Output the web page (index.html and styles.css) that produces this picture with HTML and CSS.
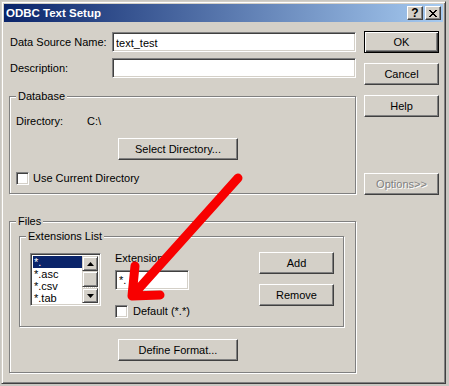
FILE: index.html
```html
<!DOCTYPE html>
<html>
<head>
<meta charset="utf-8">
<link rel="stylesheet" href="styles.css">
</head>
<body>

<div class="dialog">
  <div class="titlebar">
    <span class="title">ODBC Text Setup</span>
    <div class="capbtns">
      <span class="capbtn help">?</span>
      <span class="capbtn">
        <svg width="8" height="7" viewBox="0 0 8 7"><path d="M0 0L7 7M1 0L8 7M7 0L0 7M8 0L1 7" stroke="#000" stroke-width="1"/></svg>
      </span>
    </div>
  </div>

  <div class="content">
    <div class="main">
      <div class="field">
        <label>Data Source Name:</label>
        <input class="edit" type="text" value="text_test">
      </div>
      <div class="field">
        <label>Description:</label>
        <input class="edit" type="text" value="">
      </div>

      <fieldset class="group db">
        <legend>Database</legend>
        <div class="dirline"><span class="dirlabel">Directory:</span><span>C:\</span></div>
        <button class="btn wide">Select Directory...</button>
        <div class="check"><span class="box"></span>Use Current Directory</div>
      </fieldset>

      <fieldset class="group files">
        <legend>Files</legend>
        <fieldset class="group exts">
          <legend>Extensions List</legend>
          <div class="extrow">
            <div class="listbox">
              <div class="items">
                <div class="item sel">*.</div>
                <div class="item">*.asc</div>
                <div class="item">*.csv</div>
                <div class="item">*.tab</div>
              </div>
              <div class="scroll">
                <span class="sbtn"><svg width="7" height="4" viewBox="0 0 7 4"><path d="M3.5 0L7 4H0z" fill="#000"/></svg></span>
                <span class="thumb"></span>
                <span class="track"></span>
                <span class="sbtn"><svg width="7" height="4" viewBox="0 0 7 4"><path d="M0 0H7L3.5 4z" fill="#000"/></svg></span>
              </div>
            </div>
            <div class="extcol">
              <div>Extension:</div>
              <input class="edit ext" type="text" value="*.">
              <div class="check"><span class="box"></span>Default (*.*)</div>
            </div>
            <div class="addcol">
              <button class="btn">Add</button>
              <button class="btn">Remove</button>
            </div>
          </div>
        </fieldset>
        <button class="btn wide">Define Format...</button>
      </fieldset>
    </div>

    <div class="side">
      <button class="btn default">OK</button>
      <button class="btn">Cancel</button>
      <button class="btn">Help</button>
      <button class="btn disabled">Options&gt;&gt;</button>
    </div>
  </div>
</div>

<svg class="arrow" width="449" height="386" viewBox="0 0 449 386">
  <path d="M238 178L133 295M135 266L132 296L160 295" fill="none" stroke="#f80000" stroke-width="9" stroke-linecap="round" stroke-linejoin="round"/>
</svg>

</body>
</html>
```

FILE: styles.css
```css
* { box-sizing: border-box; }

html, body { margin: 0; }

body {
  position: relative;
  width: 449px;
  height: 386px;
  overflow: hidden;
  background: #c9c7c2;
  font-family: "Liberation Sans", Arial, sans-serif;
  font-size: 11px;
  line-height: 13px;
  color: #000;
}

/* window frame */
.dialog {
  margin: 1px 0 0 1px;
  width: 445px;
  height: 383px;
  padding: 2px;
  background: #d4d0c8;
  border: 1px solid;
  border-color: #d4d0c8 #404040 #404040 #d4d0c8;
  box-shadow: inset 1px 1px #fff, inset -1px -1px #808080;
}

.titlebar {
  display: flex;
  align-items: center;
  height: 18px;
  padding: 0 2px;
  background: linear-gradient(to right, #0a246a, #a6caf0);
}

.title {
  color: #fff;
  font-weight: bold;
  font-size: 11.5px;
}

.capbtns {
  display: flex;
  gap: 2px;
  margin-left: auto;
}

.capbtn {
  display: flex;
  align-items: center;
  justify-content: center;
  width: 16px;
  height: 14px;
  background: #d4d0c8;
  border: 1px solid;
  border-color: #fff #404040 #404040 #fff;
  box-shadow: inset -1px -1px #808080;
  font-weight: bold;
  font-size: 12px;
}

/* body */
.content {
  display: flex;
  gap: 8px;
  padding: 9px 0 0 5px;
}

.main {
  width: 347px;
  padding-top: 1px;
}

.side {
  display: flex;
  flex-direction: column;
  width: 75px;
}

.side .btn + .btn { margin-top: 10px; }
.side .btn.disabled { margin-top: 56px; }

.field {
  display: flex;
  align-items: center;
  height: 20px;
}

.field + .field { margin-top: 6px; }

.field label {
  width: 103px;
  padding-left: 1px;
}

.edit {
  width: 244px;
  height: 20px;
  margin: 0;
  padding: 1px 3px 0;
  font: inherit;
  background: #fff;
  border: 1px solid;
  border-color: #808080 #fff #fff #808080;
  box-shadow: inset 1px 1px #404040, inset -1px -1px #d4d0c8;
  outline: none;
}

/* buttons */
.btn {
  display: block;
  height: 22px;
  width: 75px;
  margin: 0;
  padding: 0;
  font: inherit;
  color: #000;
  background: #d4d0c8;
  border: 1px solid;
  border-color: #fff #404040 #404040 #fff;
  box-shadow: inset -1px -1px #808080;
}

.btn.default {
  border-color: #000;
  box-shadow: inset 1px 1px #fff, inset -1px -1px #404040, inset -2px -2px #808080;
}

.btn.disabled {
  color: #808080;
  text-shadow: 1px 1px #fff;
}

.btn.wide {
  width: 120px;
  margin-left: 102px;
}

/* group boxes */
.group {
  margin: 0;
  min-width: 0;
  padding: 0 6px;
  border: 1px solid #808080;
  box-shadow: inset 1px 1px #fff, 1px 1px #fff;
}

.group legend {
  padding: 0 2px;
  background: #d4d0c8;
}

.db {
  margin-top: 12px;
  padding-top: 12px;
  padding-bottom: 8px;
}

.db .btn.wide { margin-top: 10px; }
.db .check { margin-top: 12px; }

.dirlabel {
  display: inline-block;
  width: 71px;
}

.check {
  display: flex;
  align-items: center;
  height: 13px;
}

.box {
  width: 13px;
  height: 13px;
  margin-right: 4px;
  background: #fff;
  border: 1px solid;
  border-color: #808080 #fff #fff #808080;
  box-shadow: inset 1px 1px #404040, inset -1px -1px #d4d0c8;
}

.files {
  margin-top: 21px;
  padding-top: 2px;
  padding-bottom: 11px;
}

.files > .btn.wide { margin-top: 12px; }

.exts {
  width: 325px;
  margin-left: 3px;
  padding-top: 9px;
  padding-bottom: 8px;
}

.extrow {
  display: flex;
  align-items: flex-start;
}

.listbox {
  display: flex;
  width: 71px;
  height: 53px;
  margin: 1px 0 0 4px;
  background: #fff;
  border: 1px solid;
  border-color: #808080 #fff #fff #808080;
  box-shadow: inset 1px 1px #404040, inset -1px -1px #d4d0c8;
  padding: 2px;
}

.items {
  flex: 1;
  font-size: 11px;
  overflow: hidden;
}

.item {
  height: 12px;
  line-height: 12px;
  padding-left: 1px;
  overflow: hidden;
}

.item.sel {
  background: #0a246a;
  color: #fff;
}

.scroll {
  display: flex;
  flex-direction: column;
  width: 16px;
}

.sbtn, .thumb {
  display: flex;
  align-items: center;
  justify-content: center;
  height: 15px;
  background: #d4d0c8;
  border: 1px solid;
  border-color: #d4d0c8 #404040 #404040 #d4d0c8;
  box-shadow: inset 1px 1px #fff, inset -1px -1px #808080;
}

.thumb { height: 16px; }

.track {
  flex: 1;
  background: repeating-conic-gradient(#fff 0 25%, #d4d0c8 0 50%) 0 0 / 2px 2px;
}

.extcol {
  width: 110px;
  margin-left: 14px;
}

.edit.ext {
  width: 74px;
  margin-top: 5px;
  padding: 0 3px;
  line-height: 9px;
  vertical-align: top;
}

.extcol .check { margin-top: 15px; }
.extcol .box { margin-right: 5px; }

.addcol {
  margin-left: auto;
  margin-right: 3px;
}

.addcol .btn + .btn { margin-top: 10px; }

/* annotation */
.arrow {
  position: absolute;
  left: 0;
  top: 0;
  pointer-events: none;
}
```
